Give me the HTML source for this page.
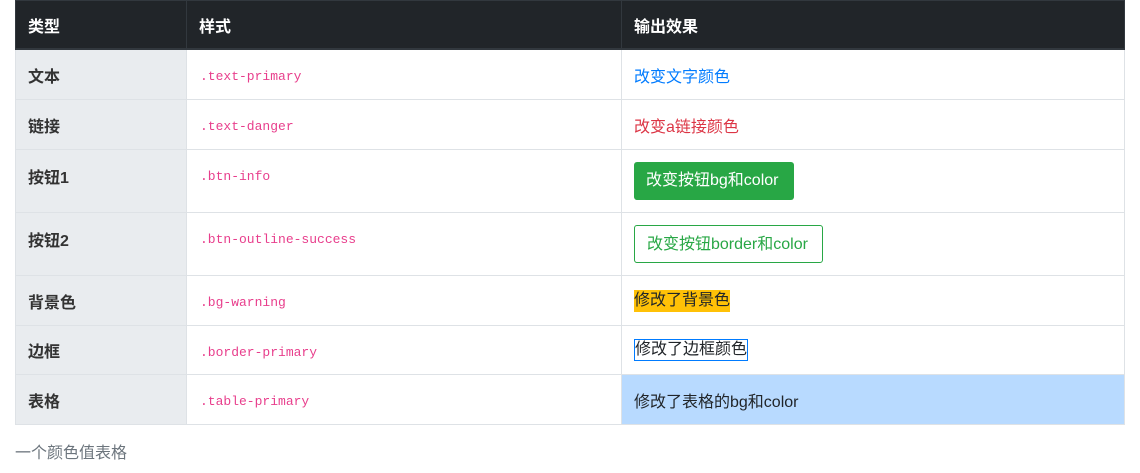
<!DOCTYPE html>
<html><head><meta charset="utf-8"><style>
*{margin:0;padding:0;box-sizing:border-box}
body{width:1140px;height:473px;background:#fff;font-family:"Liberation Sans","Noto Sans CJK SC",sans-serif;font-size:16px;color:#212529;position:relative;overflow:hidden}
.r{position:absolute;left:15px;width:1110px;border-bottom:1px solid #dee2e6;border-right:1px solid #dee2e6;border-left:1px solid #dee2e6}
.c{position:absolute;top:0;bottom:0;display:flex;align-items:center}
.c1{left:0;width:171px;background:#e9ecef;font-weight:bold;padding-left:12px;color:#333;border-right:1px solid #dee2e6}
.c2{left:171px;width:435px;padding-left:13px;border-right:1px solid #dee2e6;font-family:"Liberation Mono",monospace;font-size:13px;color:#e83e8c;align-items:flex-start;padding-top:19px}
.c3{left:606px;width:502px;padding-left:12px}
.hd{top:0;height:50px;background:#212529;color:#fff;font-weight:bold;border:1px solid #32383e;border-bottom:2px solid #32383e}
.hd .c{padding-left:12px;border-right:1px solid #32383e}
.btn{display:inline-block;border-radius:3px;padding:0 12px;height:38px;line-height:38px;font-size:16px}
</style></head><body>
<div class="r hd"><div class="c" style="left:0;width:171px">类型</div><div class="c" style="left:171px;width:435px">样式</div><div class="c" style="left:606px;width:502px;border:none">输出效果</div></div>
<div class="r" style="top:50px;height:50px"><div class="c c1">文本</div><div class="c c2">.text-primary</div><div class="c c3" style="color:#007bff">改变文字颜色</div></div>
<div class="r" style="top:100px;height:50px"><div class="c c1">链接</div><div class="c c2">.text-danger</div><div class="c c3" style="color:#dc3545">改变a链接颜色</div></div>
<div class="r" style="top:150px;height:63px"><div class="c c1" style="align-items:flex-start;padding-top:14px">按钮1</div><div class="c c2">.btn-info</div><div class="c c3"><span class="btn" style="background:#28a745;color:#fff;width:160px">改变按钮bg和color</span></div></div>
<div class="r" style="top:213px;height:63px"><div class="c c1" style="align-items:flex-start;padding-top:14px">按钮2</div><div class="c c2">.btn-outline-success</div><div class="c c3"><span class="btn" style="border:1px solid #28a745;color:#28a745;width:189px">改变按钮border和color</span></div></div>
<div class="r" style="top:276px;height:50px"><div class="c c1">背景色</div><div class="c c2">.bg-warning</div><div class="c c3"><span style="background:#ffc107;line-height:22px">修改了背景色</span></div></div>
<div class="r" style="top:326px;height:49px"><div class="c c1">边框</div><div class="c c2">.border-primary</div><div class="c c3"><span style="border:1px solid #007bff;line-height:20px">修改了边框颜色</span></div></div>
<div class="r" style="top:375px;height:50px"><div class="c c1">表格</div><div class="c c2">.table-primary</div><div class="c c3" style="background:#b8daff">修改了表格的bg和color</div></div>
<div style="position:absolute;left:15px;top:439px;color:#6c757d;font-size:16px">一个颜色值表格</div>
</body></html>
